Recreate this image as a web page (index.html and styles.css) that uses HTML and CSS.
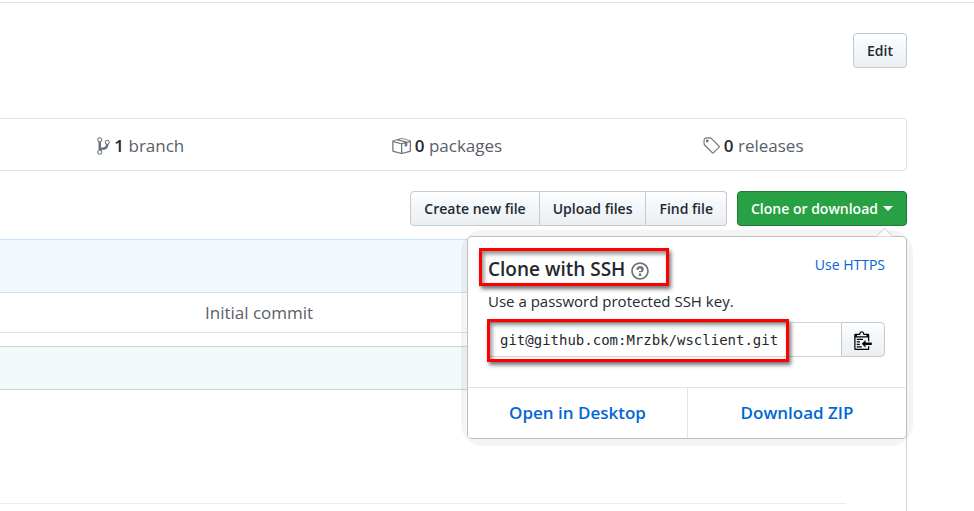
FILE: index.html
```html
<!DOCTYPE html>
<html lang="en">
<head>
<meta charset="utf-8">
<meta name="viewport" content="width=device-width, initial-scale=1">
<title>Repository</title>
<link rel="stylesheet" href="styles.css">
</head>
<body>
<main class="page">
  <header class="meta">
    <button class="btn" type="button">Edit</button>
  </header>

  <nav class="summary">
    <a class="stat" href="#branches">
      <svg class="icon" width="13" height="20" viewBox="0 0 10 16" aria-hidden="true"><path fill-rule="evenodd" d="M10 5c0-1.11-.89-2-2-2a1.993 1.993 0 0 0-1 3.72v.3c-.02.52-.23.98-.63 1.38-.4.4-.86.61-1.38.63-.83.02-1.48.16-2 .45V4.72a1.993 1.993 0 0 0-1-3.72C.88 1 0 1.89 0 3a2 2 0 0 0 1 1.72v6.56c-.59.35-1 .99-1 1.72 0 1.11.89 2 2 2 1.11 0 2-.89 2-2 0-.53-.2-1-.53-1.36.09-.06.48-.41.59-.47.25-.11.56-.17.94-.17 1.05-.05 1.95-.45 2.75-1.25S8.95 7.77 9 6.73h-.02C9.59 6.37 10 5.73 10 5zM2 1.8c.66 0 1.2.55 1.2 1.2 0 .65-.55 1.2-1.2 1.2C1.35 4.2.8 3.65.8 3c0-.65.55-1.2 1.2-1.2zm0 12.41c-.66 0-1.2-.55-1.2-1.2 0-.65.55-1.2 1.2-1.2.65 0 1.2.55 1.2 1.2 0 .65-.55 1.2-1.2 1.2zm6-8c-.66 0-1.2-.55-1.2-1.2 0-.65.55-1.2 1.2-1.2.65 0 1.2.55 1.2 1.2 0 .65-.55 1.2-1.2 1.2z"/></svg>
      <span><b>1</b> branch</span>
    </a>
    <a class="stat" href="#packages">
      <svg class="icon" width="20" height="20" viewBox="0 0 16 16" aria-hidden="true"><path fill-rule="evenodd" d="M1 4.27v7.47c0 .45.3.84.75.97l6.5 1.73c.16.05.34.05.5 0l6.5-1.73c.45-.13.75-.52.75-.97V4.27c0-.45-.3-.84-.75-.97l-6.5-1.74a1.4 1.4 0 0 0-.5 0L1.75 3.3c-.45.13-.75.52-.75.97zm7 9.09l-6-1.59V5l6 1.61v6.75zM2 4l2.5-.67L11 5.06l-2.5.67L2 4zm13 7.77l-6 1.59V6.61l2-.55V8.5l2-.53V5.53L15 5v6.77zm-2-7.24L6.5 2.8l2-.53L15 4l-2 .53z"/></svg>
      <span><b>0</b> packages</span>
    </a>
    <a class="stat" href="#releases">
      <svg class="icon" width="18" height="20" viewBox="0 0 14 16" aria-hidden="true"><path fill-rule="evenodd" d="M7.73 1.73C7.26 1.26 6.62 1 5.96 1H3.5C2.13 1 1 2.13 1 3.5v2.47c0 .66.27 1.3.73 1.77l6.06 6.06c.39.39 1.02.39 1.41 0l4.59-4.59a.996.996 0 0 0 0-1.41L7.73 1.73zM2.38 7.09c-.31-.3-.47-.7-.47-1.13V3.5c0-.88.72-1.59 1.59-1.59h2.47c.42 0 .83.16 1.13.47l6.14 6.13-4.73 4.73-6.13-6.15zM3.01 3h2v2H3V3h.01z"/></svg>
      <span><b>0</b> releases</span>
    </a>
  </nav>

  <div class="actions">
    <div class="btn-group">
      <button class="btn" type="button">Create new file</button>
      <button class="btn" type="button">Upload files</button>
      <button class="btn" type="button">Find file</button>
    </div>
    <div class="clone">
      <button class="btn btn-primary" type="button">Clone or download <span class="caret"></span></button>
      <section class="popover">
        <div class="popover-body">
          <div class="popover-head">
            <h1 class="title">Clone with SSH
              <svg class="icon" width="18" height="20" viewBox="0 0 14 16" aria-hidden="true"><path fill-rule="evenodd" d="M6 10h2v2H6v-2zm4-3.5C10 8.64 8 9 8 9H6c0-.55.45-1 1-1h.5c.28 0 .5-.22.5-.5v-1c0-.28-.22-.5-.5-.5h-1c-.28 0-.5.22-.5.5V7H4c0-1.5 1.5-3 3-3s3 1 3 2.5zM7 2.3c3.14 0 5.7 2.56 5.7 5.7s-2.56 5.7-5.7 5.7A5.71 5.71 0 0 1 1.3 8c0-3.14 2.56-5.7 5.7-5.7zM7 1C3.14 1 0 4.14 0 8s3.14 7 7 7 7-3.14 7-7-3.14-7-7-7z"/></svg>
            </h1>
            <a class="switch" href="#https">Use HTTPS</a>
          </div>
          <label class="hint" for="clone-url">Use a password protected SSH key.</label>
          <div class="field">
            <input class="url" id="clone-url" type="text" value="git@github.com:Mrzbk/wsclient.git" readonly>
            <button class="btn btn-copy" type="button" aria-label="Copy">
              <svg width="18" height="20" viewBox="0 0 14 16" aria-hidden="true"><path fill-rule="evenodd" d="M2 13h4v1H2v-1zm5-6H2v1h5V7zm2 3V8l-3 3 3 3v-2h5v-2H9zM4.5 9H2v1h2.5V9zM2 12h2.5v-1H2v1zm9 1h1v2c-.02.28-.11.52-.3.7-.19.18-.42.28-.7.3H1c-.55 0-1-.45-1-1V4c0-.55.45-1 1-1h3c0-1.11.89-2 2-2 1.11 0 2 .89 2 2h3c.55 0 1 .45 1 1v5h-1V6H1v9h10v-2zM2 5h8c0-.55-.45-1-1-1H8c-.55 0-1-.45-1-1s-.45-1-1-1-1 .45-1 1-.45 1-1 1H3c-.55 0-1 .45-1 1z"/></svg>
            </button>
          </div>
        </div>
        <div class="popover-links">
          <a href="#desktop">Open in Desktop</a>
          <a href="#zip">Download ZIP</a>
        </div>
        <div class="mark mark-title"></div>
        <div class="mark mark-url"></div>
      </section>
    </div>
  </div>

  <div class="files">
    <div class="latest"></div>
    <div class="file-row"><a href="#commit">Initial commit</a></div>
  </div>

  <article class="readme">
    <div class="readme-bar"></div>
    <div class="readme-body"><hr></div>
  </article>
</main>
</body>
</html>
```
FILE: styles.css
```css
* {
  box-sizing: border-box;
}

body {
  margin: 0;
  background: #fff;
  color: #24292e;
  font: 17px/26px "Open Sans", "Noto Sans", sans-serif;
}

a {
  color: #0366d6;
  text-decoration: none;
}

.icon {
  fill: #6a737d;
  flex: none;
}

.page {
  display: flex;
  flex-direction: column;
  min-height: 100vh;
  padding: 2px 67px 0 0;
}

.meta {
  display: flex;
  justify-content: flex-end;
  margin-right: -67px;
  padding: 30px 67px 50px 0;
  border-top: 1px solid #e1e4e8;
}

.btn {
  height: 35px;
  padding: 0 13px;
  border: 1px solid #c6cace;
  border-radius: 4px;
  background: linear-gradient(#fff, #f3f8fc 35%, #eceff1);
  color: #24292e;
  font: 600 14px/20px "Open Sans", "Noto Sans", sans-serif;
  white-space: nowrap;
}

.summary {
  display: grid;
  grid-template-columns: 294fr 306fr 307fr;
  border: 1px solid #dfe2e5;
  border-left: 0;
  border-radius: 0 4px 4px 0;
}

.stat {
  display: flex;
  align-items: center;
  justify-content: center;
  gap: 4px;
  padding: 14px 0 11px;
  color: #586069;
}

.stat:first-child {
  padding-right: 12px;
}

.stat b {
  color: #24292e;
  font-weight: 600;
}

.actions {
  display: flex;
  justify-content: flex-end;
  gap: 10px;
  padding: 20px 0 13px;
}

.btn-group {
  display: flex;
}

.btn-group .btn {
  border-radius: 0;
}

.btn-group .btn + .btn {
  border-left: 0;
}

.btn-group .btn:first-child {
  border-radius: 4px 0 0 4px;
}

.btn-group .btn:last-child {
  border-radius: 0 4px 4px 0;
}

.clone {
  position: relative;
}

.btn-primary {
  display: flex;
  align-items: center;
  gap: 5px;
  border-color: #1f7a35;
  background: #28a044;
  color: #fff;
}

.caret {
  border: 5px solid transparent;
  border-top-color: #fff;
  border-bottom: 0;
}

.popover {
  position: absolute;
  z-index: 1;
  top: 45px;
  right: 0;
  width: 440px;
  border: 1px solid #c5c8cb;
  border-radius: 5px;
  background: #fff;
}

.popover::before {
  content: "";
  position: absolute;
  z-index: -1;
  inset: -7px -7px -8px;
  border-radius: 22px;
  background: rgba(27, 31, 35, 0.05);
  clip-path: polygon(evenodd, 0 0, 100% 0, 100% 100%, 0 100%, 0 0, 7px 7px, calc(100% - 7px) 7px, calc(100% - 7px) calc(100% - 8px), 7px calc(100% - 8px), 7px 7px);
}

.popover::after {
  content: "";
  position: absolute;
  top: -7px;
  right: 15px;
  width: 12px;
  height: 12px;
  border: solid #c5c8cb;
  border-width: 1px 0 0 1px;
  background: #fff;
  transform: rotate(45deg);
  clip-path: polygon(0 0, 100% 0, 0 100%);
}

.popover-body {
  padding: 15px 21px 30px 20px;
}

.popover-head {
  display: flex;
  justify-content: space-between;
}

.title {
  display: flex;
  align-items: center;
  gap: 6px;
  margin: 4px 0;
  font: 600 19px/26px "Open Sans", "Noto Sans", sans-serif;
}

.title .icon {
  margin-top: 3px;
}

.switch {
  font-size: 14px;
}

.hint {
  display: block;
  margin: 2px 0 8px;
  font-size: 15px;
}

.field {
  display: flex;
}

.url {
  flex: 1;
  min-width: 0;
  height: 35px;
  padding: 0 11px;
  border: 1px solid #d1d5da;
  border-right: 0;
  border-radius: 4px 0 0 4px;
  color: #24292e;
  font: 14px/20px "DejaVu Sans Mono", monospace;
}

.btn-copy {
  display: flex;
  align-items: center;
  padding: 0 12px;
  border-radius: 0 4px 4px 0;
}

.popover-links {
  display: grid;
  grid-template-columns: 1fr 1fr;
  border-top: 1px solid #e1e4e8;
  text-align: center;
  font-weight: 600;
}

.popover-links a {
  padding: 12px 0;
}

.popover-links a + a {
  border-left: 1px solid #e1e4e8;
}

.mark {
  position: absolute;
  border: 3px solid #f00;
  box-shadow: 2px 3px 4px rgba(0, 0, 0, 0.55), inset 2px 3px 4px rgba(0, 0, 0, 0.45);
  pointer-events: none;
}

.mark-title {
  top: 11px;
  left: 11px;
  width: 190px;
  height: 38px;
}

.mark-url {
  top: 82px;
  left: 19px;
  width: 302px;
  height: 43px;
}

.files {
  border-right: 1px solid #d1d5da;
  border-bottom: 1px solid #dfe2e5;
}

.latest {
  height: 54px;
  border: solid #c8e1ff;
  border-width: 1px 0;
  background: #f2f8fd;
}

.file-row {
  padding: 7px 0 6px 205px;
}

.file-row a {
  color: #586069;
}

.readme {
  flex: 1;
  margin-top: 13px;
  border: solid #d1d5da;
  border-width: 1px 1px 0 0;
}

.readme-bar {
  height: 43px;
  border-bottom: 1px solid #d1d5da;
  background: #f3f8fb;
}

.readme-body {
  padding: 113px 60px 0 0;
}

.readme-body hr {
  margin: 0;
  border: 0;
  border-top: 1px solid #eaecef;
}
```
